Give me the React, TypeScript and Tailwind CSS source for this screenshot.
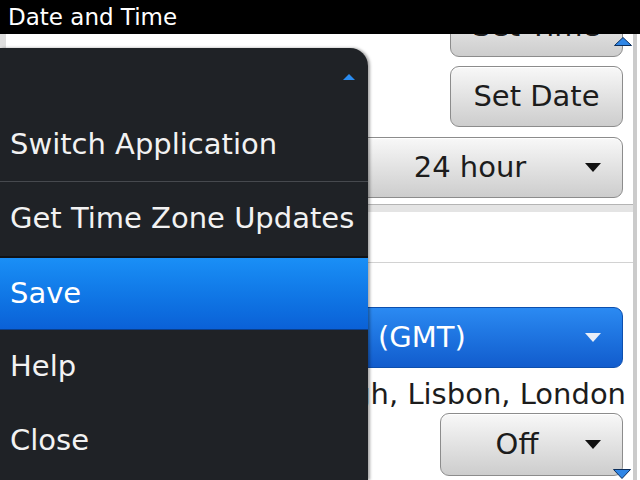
const Caret = ({ color = "#111" }: { color?: string }) => (
  <svg width="16" height="9" viewBox="0 0 16 9">
    <path d="M0 0 H16 L8 9 Z" fill={color} />
  </svg>
);

const grayBtn =
  "rounded-[9px] border border-[#8c8c8c] bg-gradient-to-b from-[#f8f8f8] to-[#cdcdcd] shadow-[inset_0_1px_0_#fff] text-[#1c1c1c]";

const menuItems = ["Switch Application", "Get Time Zone Updates", "Save", "Help", "Close"];

const App = () => {
  return (
    <div
      className="relative w-[640px] h-[480px] overflow-hidden bg-white flex flex-col"
      style={{ fontFamily: '"DejaVu Sans", "Liberation Sans", sans-serif' }}
    >
      <div className="relative z-10 h-[34px] bg-black text-white text-[23px] leading-[34px] pl-[8px] shrink-0">
        Date and Time
      </div>

      <div className="flex-1 flex flex-col border-l-[6px] border-[#dedede] mr-[3px] border-r-[4px] border-r-[#cbcbcb]">
        <div className="flex justify-end pr-[10px] mt-[-37px]">
          <div className={`${grayBtn} w-[173px] h-[60px] flex items-center justify-center text-[29px]`}>
            Set Time
          </div>
        </div>
        <div className="flex justify-end pr-[10px] mt-[9px]">
          <div className={`${grayBtn} w-[173px] h-[61px] flex items-center justify-center text-[29px]`}>
            Set Date
          </div>
        </div>
        <div className="flex justify-end pr-[10px] mt-[10px]">
          <div className={`${grayBtn} w-[293px] h-[61px] flex items-center pl-[24px] pr-[21px] text-[29px]`}>
            <span className="flex-1 text-center">24 hour</span>
            <Caret />
          </div>
        </div>
        <div className="mt-[6px] h-[8px] border-t border-[#b4b4b4] bg-[#e4e4e4]" />
        <div className="h-[51px] border-b border-[#d2d2d2]" />
        <div className="flex justify-end pr-[10px] mt-[44px]">
          <div className="w-[293px] h-[61px] rounded-[9px] border border-[#0d4fae] bg-gradient-to-b from-[#2b8af2] to-[#125ccd] flex items-center pl-[47px] pr-[21px] text-[29px] text-white">
            <span className="flex-1">(GMT)</span>
            <Caret color="#e8eef8" />
          </div>
        </div>
        <div className="mt-[10px] pr-[7px] text-right text-[29px] leading-[32px] text-[#1c1c1c] whitespace-nowrap">
          Dublin, Edinburgh, Lisbon, London
        </div>
        <div className="flex justify-end pr-[10px] mt-[3px]">
          <div className={`${grayBtn} w-[183px] h-[63px] flex items-center pl-[8px] pr-[21px] text-[29px]`}>
            <span className="flex-1 text-center">Off</span>
            <Caret />
          </div>
        </div>
      </div>

      {/* scroll indicators */}
      <svg className="absolute left-[614px] top-[37px]" width="18" height="9" viewBox="0 0 18 9">
        <path d="M0.5 8.5 L9 0.5 L17.5 8.5 Z" fill="#2f86e6" stroke="#0b2e5c" />
      </svg>
      <svg className="absolute left-[613px] top-[469px]" width="18" height="10" viewBox="0 0 18 10">
        <path d="M0.5 0.5 L9 9.5 L17.5 0.5 Z" fill="#2f86e6" stroke="#0b2e5c" />
      </svg>

      {/* menu overlay */}
      <div className="absolute left-0 top-[48px] w-[368px] h-[432px] rounded-tr-[18px] bg-[#1f2226] shadow-[2px_0_3px_rgba(0,0,0,0.35)] flex flex-col text-[29px] text-[#f2f2f2]">
        <div className="h-[60px] flex justify-end items-end pr-[13px] pb-[28px]">
          <svg width="12" height="6" viewBox="0 0 12 6">
            <path d="M0 6 L6 0 L12 6 Z" fill="#2a8cf0" />
          </svg>
        </div>
        {menuItems.map((label, i) => (
          <div
            key={label}
            className={
              label === "Save"
                ? "h-[74px] flex items-center pl-[10px] bg-gradient-to-b from-[#1a8ff6] to-[#0b61d7] border-t-2 border-[#101215] border-b border-b-[#0a3f8c] text-white"
                : i < 1
                ? "h-[74px] flex items-center pl-[10px] border-b border-[#46494e]"
                : "h-[74px] flex items-center pl-[10px]"
            }
          >
            {label}
          </div>
        ))}
      </div>
    </div>
  );
};

export default App;
